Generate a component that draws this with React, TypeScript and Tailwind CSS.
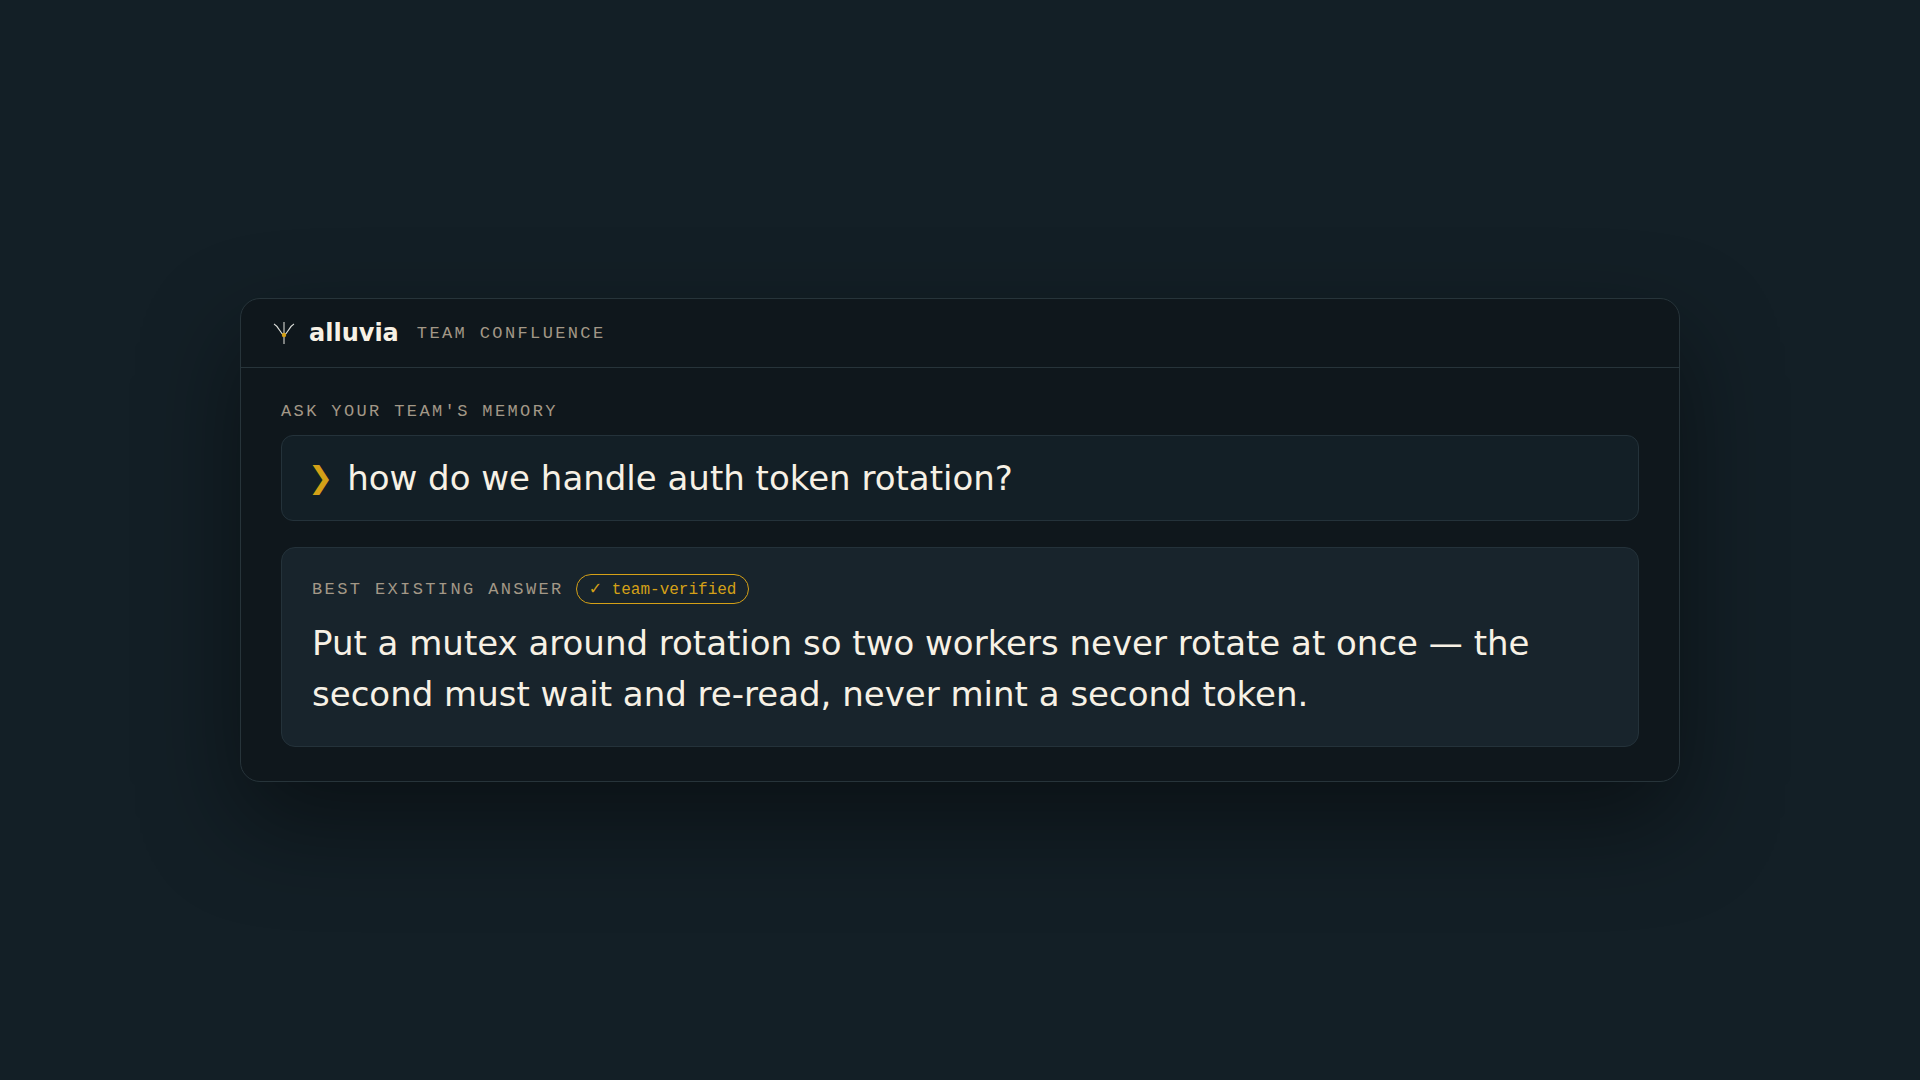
import type { ReactNode } from 'react';

function LogoMark() {
  return (
    <svg viewBox="0 0 26 26" fill="none" className="w-[26px] h-[26px]" aria-hidden="true">
      <path d="M13 2V24" stroke="#7b7f7e" strokeWidth="2" />
      <path
        d="M3 4C8 6.500 8.500 13 13 15M23 4C18 6.500 17.500 13 13 15"
        stroke="#dcded9"
        strokeWidth="1.2"
      />
      <circle cx="13" cy="15" r="2.2" fill="#d4a017" />
    </svg>
  );
}

function Label({ children }: { children: ReactNode }) {
  return (
    <span className="font-['Liberation_Mono',monospace] text-[17px] leading-[19px] tracking-[0.14em] uppercase text-[#a39887]">
      {children}
    </span>
  );
}

export default function App() {
  return (
    <main className="flex min-h-screen items-center justify-center bg-[#131f26] px-6 font-['DejaVu_Sans',sans-serif] text-[#f7f1e5]">
      <section className="w-full max-w-[1440px] rounded-[20px] border border-[#27343a] bg-[#0f171c] shadow-[0_40px_100px_rgba(0,0,0,0.45)]">
        {/* Header */}
        <header className="flex items-center gap-3 border-b border-[#27343a] px-[30px] py-5">
          <LogoMark />
          <h1 className="text-2xl leading-7 font-bold">alluvia</h1>
          <div className="ml-1.5 flex">
            <Label>Team Confluence</Label>
          </div>
        </header>

        <div className="flex flex-col px-10 py-[34px]">
          {/* Question */}
          <div className="flex">
            <Label>Ask your team's memory</Label>
          </div>
          <div className="mt-3.5 flex items-center gap-3.5 rounded-xl border border-[#24323a] bg-[#131f26] px-[26px] py-[22px] text-[34px] leading-10">
            <span className="text-[30px] text-[#d4a017]">❯</span>
            <p>how do we handle auth token rotation?</p>
          </div>

          {/* Answer */}
          <article className="mt-[26px] rounded-[14px] border border-[#24323a] bg-[#18242c] px-[30px] py-[26px]">
            <div className="flex items-center gap-3">
              <Label>Best existing answer</Label>
              <span className="rounded-full border border-[#d4a017] px-3 pt-1.5 pb-1 font-['Liberation_Mono','DejaVu_Sans',monospace] text-base leading-[18px] text-[#d4a017]">
                ✓ team-verified
              </span>
            </div>
            <p className="mt-3.5 text-[34px] leading-[51px]">
              Put a mutex around rotation so two workers never rotate at once — the second must wait and
              re-read, never mint a second token.
            </p>
          </article>
        </div>
      </section>
    </main>
  );
}
